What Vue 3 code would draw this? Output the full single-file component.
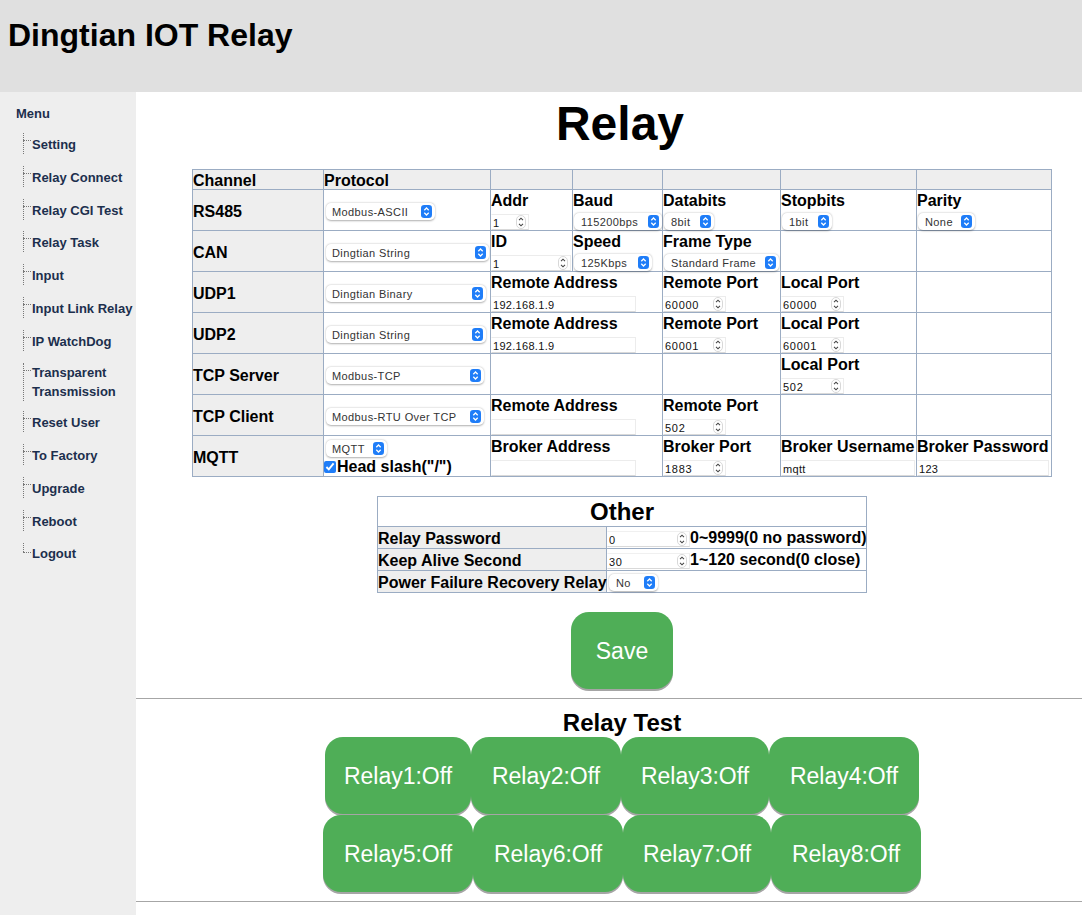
<script setup>
const menu = ['Setting','Relay Connect','Relay CGI Test','Relay Task','Input','Input Link Relay','IP WatchDog','Transparent Transmission','Reset User','To Factory','Upgrade','Reboot','Logout']
const num = (l, v, w) => ({ l, t: 'num', v, w })
const sel = (l, v, w) => ({ l, t: 'sel', v, w })
const txt = (l, v, w) => ({ l, t: 'txt', v, w })
const e = {}
const rows = [
  { name: 'RS485', proto: 'Modbus-ASCII', pw: 109, cells: [num('Addr','1',38), sel('Baud','115200bps',88), sel('Databits','8bit',50), sel('Stopbits','1bit',50), sel('Parity','None',57)] },
  { name: 'CAN', proto: 'Dingtian String', pw: 163, cells: [num('ID','1',80), sel('Speed','125Kbps',78), sel('Frame Type','Standard Frame',115), e, e] },
  { name: 'UDP1', proto: 'Dingtian Binary', pw: 160, span: 2, cells: [txt('Remote Address','192.168.1.9',145), num('Remote Port','60000',63), num('Local Port','60000',63), e] },
  { name: 'UDP2', proto: 'Dingtian String', pw: 160, span: 2, cells: [txt('Remote Address','192.168.1.9',145), num('Remote Port','60001',63), num('Local Port','60001',63), e] },
  { name: 'TCP Server', proto: 'Modbus-TCP', pw: 158, span: 2, cells: [e, e, num('Local Port','502',63), e] },
  { name: 'TCP Client', proto: 'Modbus-RTU Over TCP', pw: 158, span: 2, cells: [txt('Remote Address','',145), num('Remote Port','502',63), e, e] },
  { name: 'MQTT', proto: 'MQTT', pw: 61, mqtt: true, span: 2, cells: [txt('Broker Address','',145), num('Broker Port','1883',63), txt('Broker Username','mqtt',134), txt('Broker Password','123',132)] },
]
const relayRows = [
  [['Relay1:Off',146],['Relay2:Off',150],['Relay3:Off',148],['Relay4:Off',150]],
  [['Relay5:Off',150],['Relay6:Off',150],['Relay7:Off',148],['Relay8:Off',150]],
]
</script>

<template>
  <div class="page">
    <header class="top"><h1>Dingtian IOT Relay</h1></header>
    <div class="body">
      <nav class="side">
        <div class="menu-title">Menu</div>
        <ul>
          <li v-for="(m, i) in menu" :key="m" :class="{ last: i === menu.length - 1 }"><a>{{ m }}</a></li>
        </ul>
      </nav>
      <main class="main">
        <section class="content">
          <h2 class="page-title">Relay</h2>
          <table class="grid">
            <colgroup>
              <col class="c1"><col class="c2"><col class="c3"><col class="c4"><col class="c5"><col class="c6"><col class="c7">
            </colgroup>
            <tbody>
              <tr class="head">
                <th>Channel</th><th>Protocol</th><th></th><th></th><th></th><th></th><th></th>
              </tr>
              <tr v-for="r in rows" :key="r.name" class="row">
                <th>{{ r.name }}</th>
                <td class="proto" :class="{ mq: r.mqtt }">
                  <span class="sel" :style="{ width: r.pw + 'px' }">
                    <select><option>{{ r.proto }}</option></select>
                    <svg class="badge" viewBox="0 0 12 14"><rect width="12" height="14" rx="3.5" fill="#1f7df8"/><path d="M3.6 5.6 6 3.2l2.4 2.4M3.6 8.4 6 10.8l2.4-2.4" fill="none" stroke="#fff" stroke-width="1.4"/></svg>
                  </span>
                  <label v-if="r.mqtt" class="check"><input type="checkbox" checked>Head slash("/")</label>
                </td>
                <td v-for="(c, i) in r.cells" :key="i" :colspan="r.span && i === 0 ? r.span : 1" class="field">
                  <template v-if="c.t">
                    <div class="lbl">{{ c.l }}</div>
                    <span v-if="c.t === 'sel'" class="sel sel-f" :style="{ width: c.w + 'px' }">
                      <select><option>{{ c.v }}</option></select>
                      <svg class="badge" viewBox="0 0 12 14"><rect width="12" height="14" rx="3.5" fill="#1f7df8"/><path d="M3.6 5.6 6 3.2l2.4 2.4M3.6 8.4 6 10.8l2.4-2.4" fill="none" stroke="#fff" stroke-width="1.4"/></svg>
                    </span>
                    <span v-else class="inp" :style="{ width: c.w + 'px' }">
                      <input :type="c.t === 'num' ? 'number' : 'text'" :value="c.v">
                      <svg v-if="c.t === 'num'" class="spin" viewBox="0 0 10 14"><rect x=".5" y=".5" width="9" height="13" rx="4.5" fill="#fff" stroke="#d8d8d8"/><path d="M3 5.2 5 3.2l2 2M3 8.8l2 2 2-2" fill="none" stroke="#444" stroke-width="1.1"/></svg>
                    </span>
                  </template>
                </td>
              </tr>
            </tbody>
          </table>

          <table class="other">
            <colgroup><col class="o1"><col class="o2"><col></colgroup>
            <tbody>
              <tr class="o-title"><th colspan="3">Other</th></tr>
              <tr class="o-row">
                <th>Relay Password</th>
                <td colspan="2">
                  <span class="inp o-inp"><input type="number" value="0"><svg class="spin" viewBox="0 0 10 14"><rect x=".5" y=".5" width="9" height="13" rx="4.5" fill="#fff" stroke="#d8d8d8"/><path d="M3 5.2 5 3.2l2 2M3 8.8l2 2 2-2" fill="none" stroke="#444" stroke-width="1.1"/></svg></span><b>0~9999(0 no password)</b>
                </td>
              </tr>
              <tr class="o-row">
                <th>Keep Alive Second</th>
                <td colspan="2">
                  <span class="inp o-inp"><input type="number" value="30"><svg class="spin" viewBox="0 0 10 14"><rect x=".5" y=".5" width="9" height="13" rx="4.5" fill="#fff" stroke="#d8d8d8"/><path d="M3 5.2 5 3.2l2 2M3 8.8l2 2 2-2" fill="none" stroke="#444" stroke-width="1.1"/></svg></span><b>1~120 second(0 close)</b>
                </td>
              </tr>
              <tr class="o-row">
                <th>Power Failure Recovery Relay</th>
                <td colspan="2">
                  <span class="sel o-sel">
                    <select><option>No</option></select>
                    <svg class="badge" viewBox="0 0 12 14"><rect width="12" height="14" rx="3.5" fill="#1f7df8"/><path d="M3.6 5.6 6 3.2l2.4 2.4M3.6 8.4 6 10.8l2.4-2.4" fill="none" stroke="#fff" stroke-width="1.4"/></svg>
                  </span>
                </td>
              </tr>
            </tbody>
          </table>

          <button class="btn save">Save</button>
        </section>

        <hr class="rule rule-a">

        <section class="content">
          <h3 class="test-title">Relay Test</h3>
          <div class="relays">
            <div v-for="(row, i) in relayRows" :key="i" class="relay-row">
              <button v-for="b in row" :key="b[0]" class="btn relay" :style="{ width: b[1] + 'px' }">{{ b[0] }}</button>
            </div>
          </div>
        </section>

        <hr class="rule rule-b">
      </main>
    </div>
  </div>
</template>

<style>
html, body { margin: 0; height: 100%; overflow: hidden; background: #fff; }
</style>

<style scoped>
.page { height: 915px; display: flex; flex-direction: column; font-family: "Liberation Sans", Arial, sans-serif; color: #000; overflow: hidden; }
.top { height: 92px; flex: none; background: #e0e0e0; box-sizing: border-box; padding: 17px 0 0 8px; }
.top h1 { margin: 0; font-size: 32px; line-height: 37px; font-weight: 700; }
.body { flex: 1; display: flex; min-height: 0; }

.side { width: 136px; flex: none; background: #eee; color: #1c2f4d; font-size: 13px; font-weight: 700; box-sizing: border-box; padding: 12px 0 0 16px; }
.menu-title { line-height: 19px; }
.side ul { list-style: none; margin: 10px 0 0; padding: 0 0 0 7px; }
.side li { position: relative; box-sizing: border-box; padding: 2px 0 0 9px; margin-bottom: 11.83px; line-height: 19px; height: 21px; width: 113px; }
.side li:nth-child(8) { padding-top: 0; height: 38px; margin-bottom: 10.6px; }
.side li::before { content: ""; position: absolute; left: 0; top: 0; bottom: 0; border-left: 1px dotted #777; }
.side li::after { content: ""; position: absolute; left: 0; top: 7px; width: 8px; border-top: 1px dotted #777; }
.side li.last::before { bottom: auto; height: 9px; }
.side li.last::after { top: 9px; }
.side li.last { padding-top: 1px; }

.main { flex: 1; min-width: 0; display: flex; flex-direction: column; }
.content { padding-left: 26px; display: flex; flex-direction: column; align-items: center; }
.page-title { margin: 4px 4px 18px 0; font-size: 48px; line-height: 55px; font-weight: 700; }

table { border-collapse: collapse; table-layout: fixed; }
.grid { width: 860px; }
.c1 { width: 131px; } .c2 { width: 167px; } .c3 { width: 82px; } .c4 { width: 90px; } .c5 { width: 118px; } .c6 { width: 136px; } .c7 { width: 135px; }
.grid th, .grid td, .other th, .other td { border: 1px solid #9bacc3; padding: 0; font-size: 16px; text-align: left; white-space: nowrap; }
.grid th, .other th { background: #eee; font-weight: 700; }
.grid .head th { height: 17px; line-height: 17px; padding-top: 2px; box-sizing: content-box; }
.row { height: 41px; }
.row th, .row td { height: 40px; box-sizing: border-box; }
.grid .row th { padding-top: 3px; }
.grid .proto { vertical-align: middle; padding: 3px 0 0 1px; background: #fff; }
.grid .proto.mq { vertical-align: top; padding-top: 4px; }
.field { vertical-align: top; overflow: visible; }
.grid .field { padding: 0; }
.lbl { font-weight: 700; line-height: 20px; height: 20px; padding-top: 1px; }

.sel { display: block; position: relative; height: 17px; margin-left: 1px; }
.sel select { display: block; width: 100%; height: 17px; margin: 0; border: 0; border-radius: 5px; background: #fff; box-shadow: 0 .5px 2px rgba(0,0,0,.32); appearance: none; -webkit-appearance: none; padding: 0 16px 0 6px; font: 11px "Liberation Sans", Arial, sans-serif; letter-spacing: .4px; color: #333; outline: none; }
.sel-f { margin-top: 2px; }
.sel-f select { padding-left: 7px; }
.badge { position: absolute; right: 3px; top: 2px; width: 11px; height: 13px; pointer-events: none; }

.inp { display: block; position: relative; height: 16px; margin-top: 3px; }
.inp input { display: block; width: 100%; height: 16px; box-sizing: border-box; margin: 0; padding: 2px 0 0 1px; border: 1px solid #ececec; border-left-color: transparent; border-bottom-color: #d9d9d9; background: #fff; font: 11px "Liberation Sans", Arial, sans-serif; letter-spacing: .3px; color: #111; outline: none; border-radius: 0; }
.inp input[type="number"] { appearance: textfield; -moz-appearance: textfield; letter-spacing: .7px; }
.spin { position: absolute; right: 3px; top: 1px; width: 10px; height: 14px; pointer-events: none; }

.check { display: flex; align-items: center; font-weight: 700; line-height: 18px; height: 18px; margin-top: 1px; margin-left: -1px; }
.check input { width: 12px; height: 12px; margin: 0 1px 0 0; accent-color: #1f7df8; }

.other { width: 490px; margin-top: 19px; }
.o1 { width: 229px; } .o2 { width: 83px; }
.other .o-title th { background: #fff; text-align: center; font-size: 24px; height: 30px; line-height: 28px; box-sizing: border-box; }
.o-row th, .o-row td { height: 22px; box-sizing: border-box; line-height: 20px; }
.other .o-row th { padding-top: 1px; line-height: 19px; }
.o-row b { font-weight: 700; display: inline-block; vertical-align: top; line-height: 19px; }
.o-inp { display: inline-block; width: 83px; vertical-align: top; margin: 3px 0 0 0; }
.o-inp input { border-top-color: #f0f0f0; }
.o-sel { width: 49px; margin: 2px 0 0 2px; }
.o-sel select { padding-left: 7px; }

.btn { border: 0; background: #4fae57; color: #fff; font-family: "Liberation Sans", Arial, sans-serif; font-weight: 400; border-radius: 18px; box-shadow: 0 2px 0 #a5a5a5; padding: 2px 0 0; margin: 0; }
.save { width: 102px; height: 77px; margin-top: 19px; font-size: 23px; }
.rule { border: 0; height: 1px; background: #a6a6a6; margin: 0; flex: none; }
.rule-a { margin-top: 9px; }
.test-title { margin: 11px 0 0; padding-bottom: 2px; font-size: 24px; line-height: 25px; font-weight: 700; }
.relays { display: flex; flex-direction: column; align-items: center; }
.relay-row { display: flex; height: 78px; }
.relay { height: 77px; font-size: 23px; flex: none; }
.rule-b { margin-top: 8px; }
</style>
